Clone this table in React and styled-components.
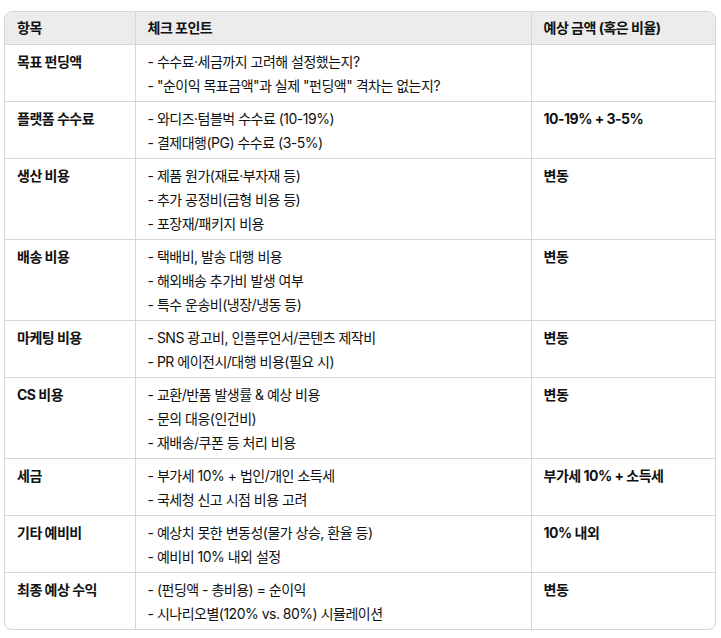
import React from "react";
import styled, { createGlobalStyle } from "styled-components";

const rows = [
  {
    item: "목표 펀딩액",
    points: ["수수료·세금까지 고려해 설정했는지?", "\"순이익 목표금액\"과 실제 \"펀딩액\" 격차는 없는지?"],
    amount: "",
  },
  {
    item: "플랫폼 수수료",
    points: ["와디즈·텀블벅 수수료 (10-19%)", "결제대행(PG) 수수료 (3-5%)"],
    amount: "10-19% + 3-5%",
  },
  {
    item: "생산 비용",
    points: ["제품 원가(재료·부자재 등)", "추가 공정비(금형 비용 등)", "포장재/패키지 비용"],
    amount: "변동",
  },
  {
    item: "배송 비용",
    points: ["택배비, 발송 대행 비용", "해외배송 추가비 발생 여부", "특수 운송비(냉장/냉동 등)"],
    amount: "변동",
  },
  {
    item: "마케팅 비용",
    points: ["SNS 광고비, 인플루언서/콘텐츠 제작비", "PR 에이전시/대행 비용(필요 시)"],
    amount: "변동",
  },
  {
    item: "CS 비용",
    points: ["교환/반품 발생률 & 예상 비용", "문의 대응(인건비)", "재배송/쿠폰 등 처리 비용"],
    amount: "변동",
  },
  {
    item: "세금",
    points: ["부가세 10% + 법인/개인 소득세", "국세청 신고 시점 비용 고려"],
    amount: "부가세 10% + 소득세",
  },
  {
    item: "기타 예비비",
    points: ["예상치 못한 변동성(물가 상승, 환율 등)", "예비비 10% 내외 설정"],
    amount: "10% 내외",
  },
  {
    item: "최종 예상 수익",
    points: ["(펀딩액 - 총비용) = 순이익", "시나리오별(120% vs. 80%) 시뮬레이션"],
    amount: "변동",
  },
];

const App = () => {
  return (
    <>
      <GlobalStyle />
      <Page>
        <TableWrap>
          <Table>
            <colgroup>
              <col style={{ width: 130 }} />
              <col style={{ width: 396 }} />
              <col />
            </colgroup>
            <thead>
              <tr>
                <Th>항목</Th>
                <Th>체크 포인트</Th>
                <Th>예상 금액 (혹은 비율)</Th>
              </tr>
            </thead>
            <tbody>
              {rows.map((row) => (
                <tr key={row.item}>
                  <Td $bold>{row.item}</Td>
                  <Td>
                    {row.points.map((p) => (
                      <Line key={p}>- {p}</Line>
                    ))}
                  </Td>
                  <Td $bold>{row.amount}</Td>
                </tr>
              ))}
            </tbody>
          </Table>
        </TableWrap>
      </Page>
    </>
  );
};

export default App;

const GlobalStyle = createGlobalStyle`
  body {
    margin: 0;
    background: #fff;
    font-family: "Inter", "Noto Sans CJK KR", sans-serif;
    color: #111;
  }
`;

const Page = styled.div`
  padding: 11px 5px 0 4px;
`;

const TableWrap = styled.div`
  border: 1px solid #d6d6d6;
  border-radius: 8px;
  overflow: hidden;
`;

const Table = styled.table`
  width: 100%;
  border-collapse: collapse;
  table-layout: fixed;
  font-size: 14px;
  letter-spacing: -0.5px;

  tr:last-child td {
    border-bottom: none;
  }
  th:last-child,
  td:last-child {
    border-right: none;
  }
`;

const Th = styled.th`
  background: #ececec;
  text-align: left;
  font-weight: 700;
  line-height: 24px;
  padding: 4px 12px 4px;
  border-right: 1px solid #d6d6d6;
  border-bottom: 1px solid #d6d6d6;
`;

const Td = styled.td`
  vertical-align: top;
  line-height: 24px;
  padding: 5px 12px 3px;
  font-weight: ${(p) => (p.$bold ? 700 : 400)};
  border-right: 1px solid #d6d6d6;
  border-bottom: 1px solid #d6d6d6;
`;

const Line = styled.div``;
